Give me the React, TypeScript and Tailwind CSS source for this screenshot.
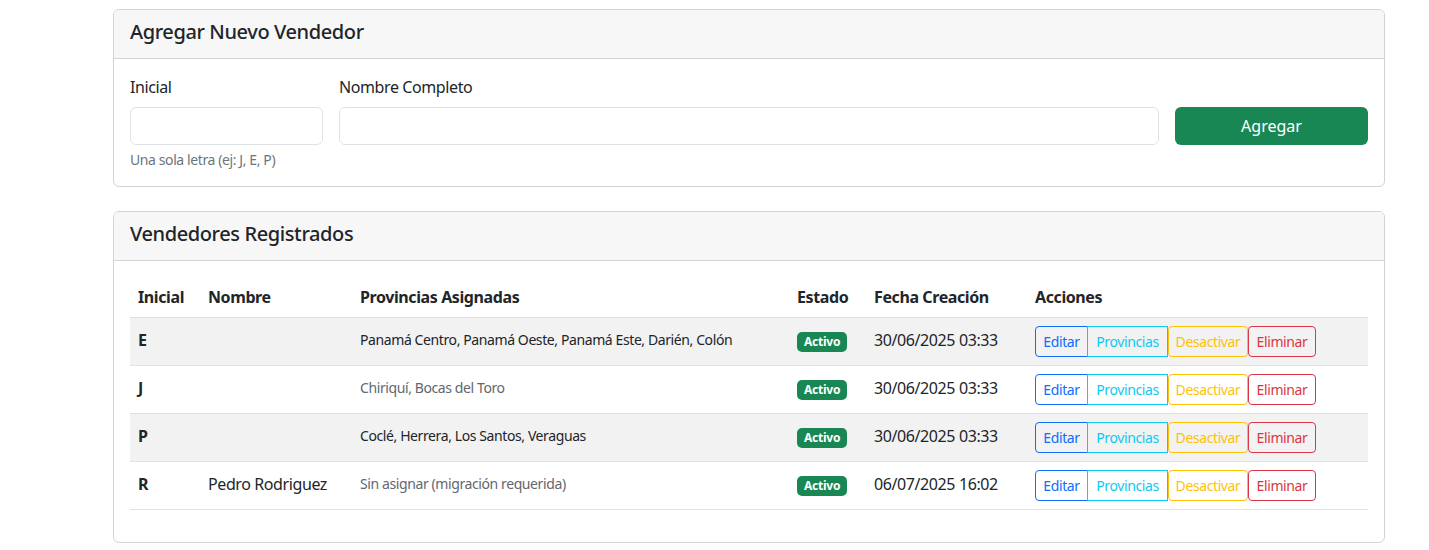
import React from "react";

const rows = [
  { ini: "E", name: "", prov: "Panamá Centro, Panamá Oeste, Panamá Este, Darién, Colón", date: "30/06/2025 03:33" },
  { ini: "J", name: "", prov: "Chiriquí, Bocas del Toro", date: "30/06/2025 03:33" },
  { ini: "P", name: "", prov: "Coclé, Herrera, Los Santos, Veraguas", date: "30/06/2025 03:33" },
  { ini: "R", name: "Pedro Rodriguez", prov: "Sin asignar (migración requerida)", date: "06/07/2025 16:02" },
];

export default function App() {
  return (
    <div className="min-h-[550px] bg-white text-[#212529] text-[16px] leading-[24px] tracking-[-0.025em]" style={{ fontFamily: '"Noto Sans", "Segoe UI", sans-serif' }}>
      <div className="ml-[113px] w-[1272px] pt-[9px]">
        {/* Card 1 */}
        <div className="border border-[#d3d3d3] rounded-[6px] overflow-hidden">
          <div className="bg-[#f7f7f7] border-b border-[#d3d3d3] px-[16px] h-[49px] flex items-center pb-[5px]">
            <h5 className="text-[20px] font-medium leading-[24px]">Agregar Nuevo Vendedor</h5>
          </div>
          <div className="p-[16px]">
            <div className="grid grid-cols-[193px_1fr_193px] gap-x-[16px]">
              <div>
                <label className="block mb-[8px] leading-[24px]">Inicial</label>
                <input className="block w-full h-[38px] border border-[#dee2e6] rounded-[6px] bg-white" />
                <div className="mt-[4px] text-[14px] leading-[21px] text-[#6c757d]">Una sola letra (ej: J, E, P)</div>
              </div>
              <div>
                <label className="block mb-[8px] leading-[24px]">Nombre Completo</label>
                <input className="block w-full h-[38px] border border-[#dee2e6] rounded-[6px] bg-white" />
              </div>
              <div className="flex items-start pt-[32px]">
                <button className="w-full h-[38px] bg-[#198754] text-white rounded-[6px] tracking-normal">Agregar</button>
              </div>
            </div>
          </div>
        </div>

        {/* Card 2 */}
        <div className="mt-[24px] border border-[#d3d3d3] rounded-[6px] overflow-hidden">
          <div className="bg-[#f7f7f7] border-b border-[#d3d3d3] px-[16px] h-[49px] flex items-center pb-[5px]">
            <h5 className="text-[20px] font-medium leading-[24px]">Vendedores Registrados</h5>
          </div>
          <div className="p-[16px]">
            <table className="w-full table-fixed border-collapse mb-[16px]">
              <colgroup>
                <col className="w-[70px]" />
                <col className="w-[152px]" />
                <col className="w-[437px]" />
                <col className="w-[77px]" />
                <col className="w-[161px]" />
                <col />
              </colgroup>
              <thead>
                <tr className="border-b border-[#dee2e6]">
                  {["Inicial", "Nombre", "Provincias Asignadas", "Estado", "Fecha Creación", "Acciones"].map((h) => (
                    <th key={h} className="text-left font-bold px-[8px] py-[8px] whitespace-nowrap">{h}</th>
                  ))}
                </tr>
              </thead>
              <tbody>
                {rows.map((r, i) => {
                  const odd = i % 2 === 0;
                  return (
                    <tr key={r.ini} className={`border-b border-[#dee2e6] h-[48px] ${odd ? "bg-[#f2f2f2]" : "bg-white"}`}>
                      <td className="px-[8px] pb-[4px] align-middle font-bold">{r.ini}</td>
                      <td className="px-[8px] pb-[4px] align-middle whitespace-nowrap">{r.name}</td>
                      <td className={`px-[8px] pb-[4px] align-middle text-[14px] whitespace-nowrap ${odd ? "text-[#212529]" : "text-[#62676d]"}`}>{r.prov}</td>
                      <td className="px-[8px] pb-[4px] align-middle">
                        <span className="inline-block bg-[#198754] text-white text-[12px] font-bold leading-[12px] px-[7px] py-[4px] rounded-[5px] tracking-[-0.02em]">Activo</span>
                      </td>
                      <td className="px-[8px] pb-[4px] align-middle whitespace-nowrap">{r.date}</td>
                      <td className="px-[8px] py-[8px] align-middle">
                        <div className="flex whitespace-nowrap text-[14px] leading-[21px]">
                          <button className="h-[31px] w-[53px] border border-[#0d6efd] text-[#0d6efd] rounded-l-[4px]">Editar</button>
                          <button className="h-[31px] w-[81px] border border-[#0dcaf0] text-[#0dcaf0] -ml-px">Provincias</button>
                          <button className="h-[31px] w-[80px] border border-[#ffc107] text-[#ffc107] rounded-[4px]">Desactivar</button>
                          <button className="h-[31px] w-[68px] border border-[#dc3545] text-[#dc3545] rounded-[4px]">Eliminar</button>
                        </div>
                      </td>
                    </tr>
                  );
                })}
              </tbody>
            </table>
          </div>
        </div>
      </div>
    </div>
  );
}
